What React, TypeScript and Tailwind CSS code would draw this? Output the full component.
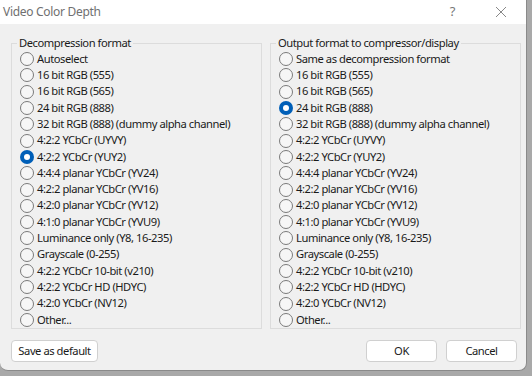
import React from "react";

const left = [
  "Autoselect",
  "16 bit RGB (555)",
  "16 bit RGB (565)",
  "24 bit RGB (888)",
  "32 bit RGB (888) (dummy alpha channel)",
  "4:2:2 YCbCr (UYVY)",
  "4:2:2 YCbCr (YUY2)",
  "4:4:4 planar YCbCr (YV24)",
  "4:2:2 planar YCbCr (YV16)",
  "4:2:0 planar YCbCr (YV12)",
  "4:1:0 planar YCbCr (YVU9)",
  "Luminance only (Y8, 16-235)",
  "Grayscale (0-255)",
  "4:2:2 YCbCr 10-bit (v210)",
  "4:2:2 YCbCr HD (HDYC)",
  "4:2:0 YCbCr (NV12)",
  "Other...",
];
const right = ["Same as decompression format", ...left.slice(1)];

function Radio({ label, checked }: { label: string; checked?: boolean }) {
  return (
    <div className="flex items-center h-[16.3px] gap-[3px]">
      {checked ? (
        <span className="w-[14px] h-[14px] rounded-full bg-[#005fb8] flex items-center justify-center shrink-0">
          <span className="w-[6px] h-[6px] rounded-full bg-white" />
        </span>
      ) : (
        <span className="w-[14px] h-[14px] rounded-full border border-[#7a7a7a] bg-[#f6f6f6] shrink-0" />
      )}
      <span className="whitespace-nowrap">{label}</span>
    </div>
  );
}

function Group({ title, items, sel }: { title: string; items: string[]; sel: number }) {
  return (
    <fieldset className="border border-[#dcdcdc] w-[251px] h-[294px] pl-[8px] pt-0 m-0">
      <legend className="px-[2px] ml-[-3px] leading-[16px]">{title}</legend>
      {items.map((it, i) => (
        <Radio key={i} label={it} checked={i === sel} />
      ))}
    </fieldset>
  );
}

export default function App() {
  return (
    <div
      className="w-[532px] h-[376px] bg-[#a9a9a9] overflow-hidden text-[11.2px] tracking-[-0.45px] text-[#1a1a1a]"
      style={{ fontFamily: '"Noto Sans", sans-serif' }}
    >
      <div className="w-[527px] h-[371px] bg-[#f0f0f0] rounded-b-[8px] border-r border-b border-[#8a8a8a] flex flex-col">
        <div className="h-[24px] bg-white flex items-center shrink-0">
          <span className="pl-[3px] text-[#707070] text-[12px] tracking-[-0.3px]">Video Color Depth</span>
          <span className="ml-auto text-[#777] text-[13px] mr-[40px]">?</span>
          <svg width="12" height="12" viewBox="0 0 12 12" className="mr-[19px]">
            <path d="M1 1 L11 11 M11 1 L1 11" stroke="#888" strokeWidth="1" />
          </svg>
        </div>
        <div className="flex gap-[8px] pl-[11px] pt-[11px]">
          <Group title="Decompression format" items={left} sel={6} />
          <Group title="Output format to compressor/display" items={right} sel={3} />
        </div>
        <div className="flex items-center pl-[11px] pr-[9px] mt-[11px]">
          <button className="h-[22px] w-[87px] bg-white border border-[#d0d0d0] rounded-[4px]">Save as default</button>
          <button className="ml-auto h-[22px] w-[71px] bg-white border border-[#d0d0d0] rounded-[4px]">OK</button>
          <button className="ml-[9px] h-[22px] w-[71px] bg-white border border-[#d0d0d0] rounded-[4px]">Cancel</button>
        </div>
      </div>
    </div>
  );
}
